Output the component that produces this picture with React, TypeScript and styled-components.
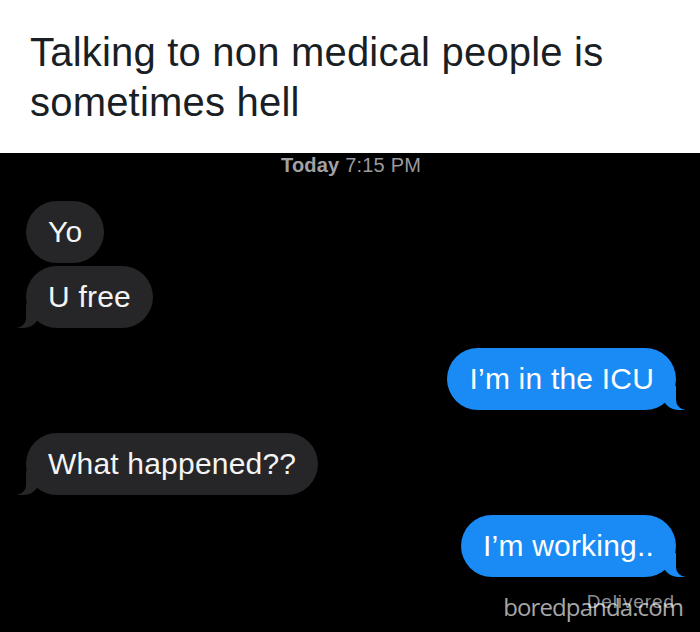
import React from 'react';
import styled, { createGlobalStyle } from 'styled-components';

const GlobalStyle = createGlobalStyle`
    html, body {
        margin: 0;
        padding: 0;
        background: #ffffff;
    }
    * {
        box-sizing: border-box;
    }
`;

const Page = styled.div`
    width: 700px;
    height: 632px;
    display: flex;
    flex-direction: column;
    overflow: hidden;
    font-family: 'Liberation Sans', Arial, sans-serif;
`;

const Header = styled.header`
    height: 153px;
    padding: 27px 30px 0 30px;
    background: #ffffff;
`;

const Title = styled.h1`
    margin: 0;
    font-size: 40px;
    line-height: 50px;
    font-weight: 400;
    color: #1a1f25;
    letter-spacing: 0.2px;
`;

const Chat = styled.section`
    position: relative;
    flex: 1;
    display: flex;
    flex-direction: column;
    padding: 0 24px 0 26px;
    background: #000000;
    overflow: hidden;
`;

const Stamp = styled.div`
    align-self: center;
    margin-bottom: 24px;
    font-size: 20px;
    line-height: 24px;
    color: #9a9a9e;
    letter-spacing: 0.2px;

    b {
        font-weight: 600;
        color: #a2a2a6;
    }
`;

type Side = 'in' | 'out';

const Bubble = styled.div<{ $side: Side; $tail?: boolean; $gap: number }>`
    position: relative;
    align-self: ${(p) => (p.$side === 'in' ? 'flex-start' : 'flex-end')};
    margin-top: ${(p) => p.$gap}px;
    padding: 13px 22px 13px 22px;
    border-radius: 31px;
    font-size: 30px;
    line-height: 36px;
    letter-spacing: 0.2px;
    color: ${(p) => (p.$side === 'in' ? '#f4f4f4' : '#ffffff')};
    background: ${(p) => (p.$side === 'in' ? '#262628' : '#1a8bf5')};

    ${(p) =>
        p.$tail &&
        (p.$side === 'in'
            ? `
        &::before {
            content: '';
            position: absolute;
            bottom: 0;
            left: -9px;
            width: 22px;
            height: 24px;
            background: #262628;
            border-bottom-right-radius: 16px 14px;
        }
        &::after {
            content: '';
            position: absolute;
            bottom: 0;
            left: -26px;
            width: 26px;
            height: 24px;
            background: #000000;
            border-bottom-right-radius: 10px;
        }
    `
            : `
        &::before {
            content: '';
            position: absolute;
            bottom: 0;
            right: -9px;
            width: 22px;
            height: 24px;
            background: #1a8bf5;
            border-bottom-left-radius: 16px 14px;
        }
        &::after {
            content: '';
            position: absolute;
            bottom: 0;
            right: -26px;
            width: 26px;
            height: 24px;
            background: #000000;
            border-bottom-left-radius: 10px;
        }
    `)}
`;

const BubbleText = styled.span`
    position: relative;
    z-index: 1;
`;

const Status = styled.div`
    align-self: flex-end;
    margin-top: 14px;
    margin-right: 1px;
    font-size: 19px;
    line-height: 22px;
    letter-spacing: 0.9px;
    color: #8e8e93;
`;

const Watermark = styled.div`
    position: absolute;
    right: 17px;
    bottom: 10px;
    font-family: 'Open Sans', 'Liberation Sans', sans-serif;
    font-size: 24px;
    line-height: 30px;
    letter-spacing: -0.9px;
    color: rgba(255, 255, 255, 0.66);
    pointer-events: none;
`;

interface Message {
    side: Side;
    text: string;
    tail?: boolean;
    gap: number;
}

const messages: Message[] = [
    { side: 'in', text: 'Yo', gap: 0 },
    { side: 'in', text: 'U free', tail: true, gap: 3 },
    { side: 'out', text: 'I’m in the ICU', tail: true, gap: 20 },
    { side: 'in', text: 'What happened??', tail: true, gap: 23 },
    { side: 'out', text: 'I’m working..', tail: true, gap: 20 },
];

export default function App() {
    return (
        <>
            <GlobalStyle />
            <Page>
                <Header>
                    <Title>
                        Talking to non medical people is
                        <br />
                        sometimes hell
                    </Title>
                </Header>
                <Chat>
                    <Stamp>
                        <b>Today</b> 7:15 PM
                    </Stamp>
                    {messages.map((m, i) => (
                        <Bubble key={i} $side={m.side} $tail={m.tail} $gap={m.gap}>
                            <BubbleText>{m.text}</BubbleText>
                        </Bubble>
                    ))}
                    <Status>Delivered</Status>
                    <Watermark>boredpanda.com</Watermark>
                </Chat>
            </Page>
        </>
    );
}
